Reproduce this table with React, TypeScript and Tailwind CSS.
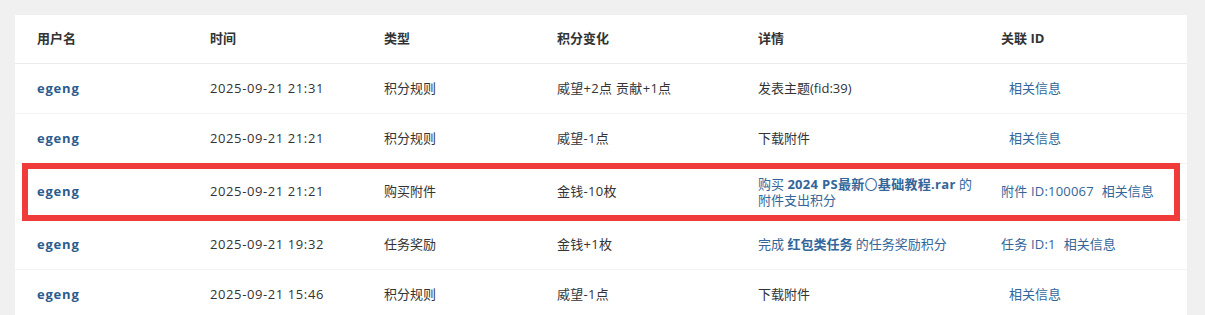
// Credit log table with a highlighted row

const font = { fontFamily: '"Open Sans", "Noto Sans CJK SC", sans-serif' }

type Row = {
  user: string
  time: string
  type: string
  change: string
  detail: React.ReactNode
  ref?: string
  tall?: boolean
  marked?: boolean
}

const rows: Row[] = [
  { user: 'egeng', time: '2025-09-21 21:31', type: '积分规则', change: '威望+2点 贡献+1点', detail: <span className="text-[#333]">发表主题(fid:39)</span> },
  { user: 'egeng', time: '2025-09-21 21:21', type: '积分规则', change: '威望-1点', detail: <span className="text-[#333]">下载附件</span> },
  {
    user: 'egeng',
    time: '2025-09-21 21:21',
    type: '购买附件',
    change: '金钱-10枚',
    detail: (
      <span className="text-[#336699] leading-4 block">
        购买 <b className="tracking-[0.3px]">2024 PS最新<span className="font-normal">〇</span>基础教程.rar</b> 的<br />附件支出积分
      </span>
    ),
    ref: '附件 ID:100067',
    tall: true,
    marked: true,
  },
  {
    user: 'egeng',
    time: '2025-09-21 19:32',
    type: '任务奖励',
    change: '金钱+1枚',
    detail: (
      <span className="text-[#336699]">
        完成 <b>红包类任务</b> 的任务奖励积分
      </span>
    ),
    ref: '任务 ID:1',
  },
  { user: 'egeng', time: '2025-09-21 15:46', type: '积分规则', change: '威望-1点', detail: <span className="text-[#333]">下载附件</span> },
]

const cols = 'grid grid-cols-[173px_174px_173px_201px_243px_1fr] pl-[22px]'

export default function App() {
  return (
    <div className="w-[1205px] h-[315px] overflow-hidden bg-[#f0f0f0] pt-[15px] pl-[15px] pr-[18px]" style={font}>
      <div className="bg-white text-[13px] text-[#333]">
        <div className={`${cols} h-[49px] items-center font-bold border-b border-[#ececec]`}>
          <div>用户名</div>
          <div>时间</div>
          <div>类型</div>
          <div>积分变化</div>
          <div>详情</div>
          <div>关联 ID</div>
        </div>
        {rows.map((r, i) => (
          <div
            key={i}
            className={`${cols} relative items-center border-b border-[#f3f3f3] ${r.tall ? 'h-[56px]' : 'h-[50px]'}`}
          >
            <div className="font-bold text-[#2d5b8e] tracking-[0.8px]">{r.user}</div>
            <div className="tracking-[0.6px]">{r.time}</div>
            <div>{r.type}</div>
            <div className="tracking-[0.3px]">{r.change}</div>
            <div>{r.detail}</div>
            <div className="flex gap-[8px] text-[#336699]">
              {r.ref ? <span className="tracking-[0.2px]">{r.ref}</span> : <span className="w-0" />}
              <span>相关信息</span>
            </div>
            {r.marked && (
              <div className="absolute -top-px bottom-[-2px] left-[7px] right-[7px] border-[6px] border-[#f03b3b] pointer-events-none" />
            )}
          </div>
        ))}
      </div>
    </div>
  )
}
